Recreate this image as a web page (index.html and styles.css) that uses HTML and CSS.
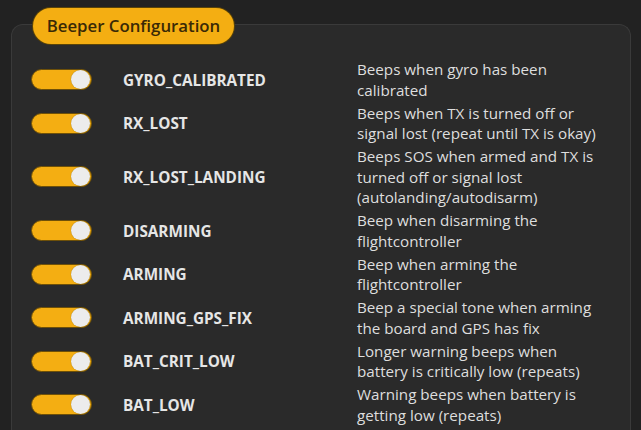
FILE: index.html
```html
<!DOCTYPE html>
<html>
<head>
<meta charset="utf-8">
<link rel="stylesheet" href="styles.css">
</head>
<body>
<div class="page">
  <section class="card">
    <div class="badge">Beeper Configuration</div>
    <div class="rows">
      <div class="row"><span class="toggle"><span class="knob"></span></span><span class="name">GYRO_CALIBRATED</span><span class="desc">Beeps when gyro has been<br>calibrated</span></div>
      <div class="row"><span class="toggle"><span class="knob"></span></span><span class="name">RX_LOST</span><span class="desc">Beeps when TX is turned off or<br>signal lost (repeat until TX is okay)</span></div>
      <div class="row"><span class="toggle"><span class="knob"></span></span><span class="name">RX_LOST_LANDING</span><span class="desc">Beeps SOS when armed and TX is<br>turned off or signal lost<br>(autolanding/autodisarm)</span></div>
      <div class="row"><span class="toggle"><span class="knob"></span></span><span class="name">DISARMING</span><span class="desc">Beep when disarming the<br>flightcontroller</span></div>
      <div class="row"><span class="toggle"><span class="knob"></span></span><span class="name">ARMING</span><span class="desc">Beep when arming the<br>flightcontroller</span></div>
      <div class="row"><span class="toggle"><span class="knob"></span></span><span class="name">ARMING_GPS_FIX</span><span class="desc">Beep a special tone when arming<br>the board and GPS has fix</span></div>
      <div class="row"><span class="toggle"><span class="knob"></span></span><span class="name">BAT_CRIT_LOW</span><span class="desc">Longer warning beeps when<br>battery is critically low (repeats)</span></div>
      <div class="row"><span class="toggle"><span class="knob"></span></span><span class="name">BAT_LOW</span><span class="desc">Warning beeps when battery is<br>getting low (repeats)</span></div>
    </div>
  </section>
</div>
</body>
</html>
```
FILE: styles.css
```css
html, body {
  margin: 0;
  padding: 0;
  background: #222222;
  height: 100%;
  overflow: hidden;
}
.page {
  padding: 24px 10px 0 11px;
  font-family: "Open Sans", "Noto Sans", sans-serif;
}
.card {
  position: relative;
  background: #2a2a2a;
  border: 1px solid #3a3a3a;
  border-bottom: none;
  border-radius: 12px 12px 0 0;
  height: 420px;
  padding: 34px 4px 0 18px;
  box-sizing: border-box;
}
.badge {
  position: absolute;
  left: 21px;
  top: -17px;
  height: 36px;
  width: 201px;
  box-sizing: border-box;
  background: #f4ae12;
  border-radius: 18px;
  color: #3a2906;
  font-size: 16.8px;
  line-height: 36px;
  text-align: center;
  font-weight: 600;
  box-shadow: 0 0 0 1px #5a4408;
}
.rows {
  display: flex;
  flex-direction: column;
  gap: 2.5px;
}
.row {
  display: grid;
  grid-template-columns: 61px 203px 1fr;
  column-gap: 31px;
  align-items: center;
  margin-left: 1px;
}
.toggle {
  display: flex;
  justify-content: flex-end;
  align-items: center;
  width: 61px;
  height: 21px;
  box-sizing: border-box;
  background: #f4ae12;
  border: 1px solid #6e5008;
  border-radius: 11px;
  padding-right: 1px;
}
.knob {
  width: 19px;
  height: 19px;
  border-radius: 50%;
  background: #ececec;
  box-shadow: 0 0 1px #8a6a10;
}
.name {
  color: #e6e6e6;
  font-weight: 700;
  font-size: 15.3px;
}
.desc {
  color: #dedede;
  font-size: 15.2px;
  line-height: 20.5px;
  white-space: nowrap;
}
```
